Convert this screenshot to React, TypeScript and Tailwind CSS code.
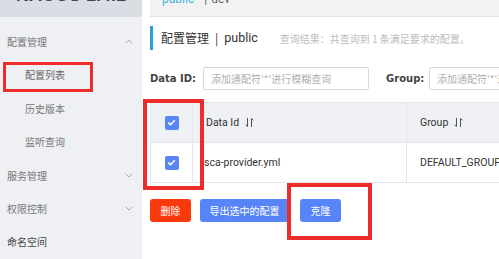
import React from "react";

const cjk = '"Noto Sans CJK SC", "Noto Sans", sans-serif';
const latin = 'Roboto, "Noto Sans CJK SC", sans-serif';

function ChevronUp() {
  return (
    <svg width="8" height="5" viewBox="0 0 8 5" fill="none">
      <path d="M0.8 4.4 L4 1.2 L7.2 4.4" stroke="#9aa0a8" strokeWidth="0.9" />
    </svg>
  );
}
function ChevronDown() {
  return (
    <svg width="8" height="5" viewBox="0 0 8 5" fill="none">
      <path d="M0.8 0.8 L4 4 L7.2 0.8" stroke="#9aa0a8" strokeWidth="0.9" />
    </svg>
  );
}
function SortIcon() {
  return (
    <svg width="9" height="11" viewBox="0 0 9 11" fill="none" className="ml-[6px]">
      <path d="M2.5 1 V9.5 M0.6 7.6 L2.5 9.6" stroke="#555" strokeWidth="1" />
      <path d="M6.5 10 V1.5 M6.5 1.4 L8.4 3.4" stroke="#555" strokeWidth="1" />
    </svg>
  );
}
function Check() {
  return (
    <div className="w-[14px] h-[14px] rounded-[2px] bg-[#5a86f5] flex items-center justify-center">
      <svg width="9" height="7" viewBox="0 0 9 7" fill="none">
        <path d="M1.2 3.6 L3.5 5.7 L7.8 1.3" stroke="#fff" strokeWidth="1.6" />
      </svg>
    </div>
  );
}

function MenuRow({ label, indent, color, chevron }: { label: string; indent?: boolean; color: string; chevron?: "up" | "down" }) {
  return (
    <div className={`h-[33.4px] flex items-center justify-between pr-[9px] ${indent ? "pl-[25px]" : "pl-[7px]"}`}>
      <span className="text-[10px] leading-[14px]" style={{ color }}>{label}</span>
      {chevron === "up" && <ChevronUp />}
      {chevron === "down" && <ChevronDown />}
    </div>
  );
}

export default function App() {
  return (
    <div className="relative w-[499px] h-[259px] overflow-hidden bg-white flex" style={{ fontFamily: cjk }}>
      {/* Sidebar */}
      <div className="w-[142px] h-full bg-[#eef0f4] flex flex-col shrink-0">
        <div className="h-[26px] bg-[#d9dde4] overflow-hidden flex justify-center">
          <div className="mt-[-15px] text-[18px] font-bold text-[#444] leading-[20px]" style={{ fontFamily: '"Liberation Sans", Arial, sans-serif' }}>
            NACOS 1.4.1
          </div>
        </div>
        <div className="mt-[8px] flex flex-col">
          <MenuRow label="配置管理" color="#777" chevron="up" />
          <MenuRow label="配置列表" indent color="#666" />
          <MenuRow label="历史版本" indent color="#777" />
          <MenuRow label="监听查询" indent color="#777" />
          <MenuRow label="服务管理" color="#777" chevron="down" />
          <MenuRow label="权限控制" color="#777" chevron="down" />
          <MenuRow label="命名空间" color="#444" />
        </div>
      </div>

      {/* Main */}
      <div className="flex-1 pl-[8px] flex flex-col min-w-0">
        <div className="h-[17px] bg-[#f2f2f2] border-b border-[#e3e3e3] overflow-hidden pl-[12px] shrink-0">
          <div className="mt-[-8px] text-[12px] leading-[14px] whitespace-nowrap" style={{ fontFamily: latin }}>
            <span className="text-[#3db3e0]">public</span>
            <span className="text-[#666] ml-[10px]">|</span>
            <span className="text-[#666] ml-[4px]">dev</span>
          </div>
        </div>

        <div className="mt-[9px] h-[24px] flex items-center border-l-[3px] border-[#2a9fd8] pl-[8px] whitespace-nowrap">
          <span className="text-[12px] text-[#333]">配置管理</span>
          <span className="text-[12px] text-[#333] mx-[6px]">|</span>
          <span className="text-[12.5px] text-[#333]" style={{ fontFamily: latin }}>public</span>
          <span className="ml-[22px] text-[10px] text-[#bcbcbc]">查询结果：共查询到 1 条满足要求的配置。</span>
        </div>

        <div className="mt-[17px] h-[23px] flex items-center whitespace-nowrap">
          <span className="shrink-0 text-[10px] font-bold text-[#444] w-[53px]" style={{ fontFamily: '"DejaVu Sans", sans-serif' }}>Data ID:</span>
          <div className="w-[166px] h-[23px] border border-[#d6d9de] rounded-[2px] flex items-center pl-[7px] shrink-0">
            <span className="text-[10px] text-[#b0b0b0]">添加通配符'*'进行模糊查询</span>
          </div>
          <span className="shrink-0 ml-[17px] text-[10px] font-bold text-[#444] w-[43px]" style={{ fontFamily: '"DejaVu Sans", sans-serif' }}>Group:</span>
          <div className="w-[120px] h-[23px] border border-[#d6d9de] rounded-[2px] flex items-center pl-[7px] shrink-0">
            <span className="text-[10px] text-[#b0b0b0]">添加通配符'*'进行模糊查询</span>
          </div>
        </div>

        {/* Table */}
        <div className="mt-[12px] w-[400px] shrink-0 border-l border-t border-[#e4e6ea] text-[10.5px] text-[#333]" style={{ fontFamily: latin }}>
          <div className="flex h-[40px] bg-[#eff1f4] border-b border-[#e4e6ea]">
            <div className="w-[42px] border-r border-[#e4e6ea] flex items-center justify-center shrink-0"><Check /></div>
            <div className="w-[214px] border-r border-[#e4e6ea] flex items-center pl-[13px] shrink-0">Data Id<SortIcon /></div>
            <div className="flex-1 flex items-center pl-[13px]">Group<SortIcon /></div>
          </div>
          <div className="flex h-[40px] bg-white border-b border-[#e4e6ea]">
            <div className="w-[42px] border-r border-[#e4e6ea] flex items-center justify-center shrink-0"><Check /></div>
            <div className="w-[214px] border-r border-[#e4e6ea] flex items-center pl-[11px] shrink-0">sca-provider.yml</div>
            <div className="flex-1 flex items-center pl-[13px] whitespace-nowrap">DEFAULT_GROUP</div>
          </div>
        </div>

        <div className="mt-[16px] flex items-center text-[10px] text-white whitespace-nowrap">
          <div className="w-[41px] h-[23px] rounded-[3px] bg-[#fa3a0c] flex items-center justify-center">删除</div>
          <div className="ml-[9px] w-[89px] h-[23px] rounded-[3px] bg-[#5784f7] flex items-center justify-center">导出选中的配置</div>
          <div className="ml-[11px] w-[41px] h-[23px] rounded-[3px] bg-[#5784f7] flex items-center justify-center">克隆</div>
        </div>
      </div>

      {/* Annotations */}
      <div className="absolute left-[3px] top-[62px] w-[90px] h-[30px] border-[3px] border-[#ee2c2c]" />
      <div className="absolute left-[143px] top-[99px] w-[61px] h-[91px] border-[4px] border-[#ee2c2c]" />
      <div className="absolute left-[287px] top-[183px] w-[85px] h-[57px] border-[4px] border-[#ee2c2c]" />
    </div>
  );
}
